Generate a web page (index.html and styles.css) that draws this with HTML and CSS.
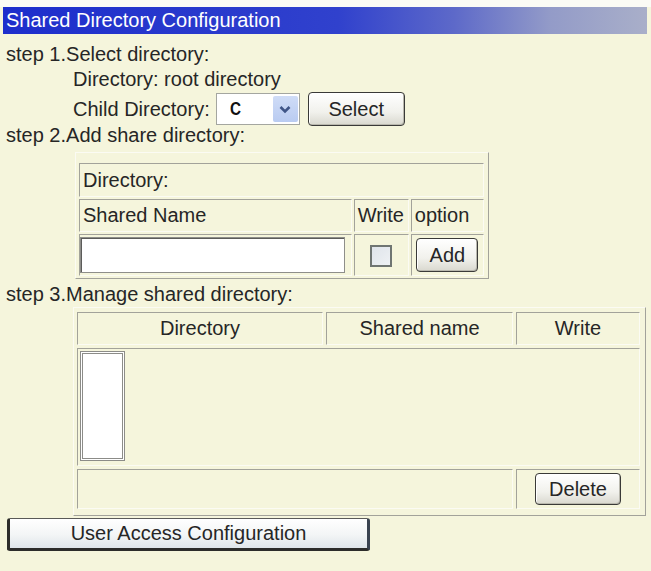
FILE: index.html
```html
<!DOCTYPE html>
<html lang="en">
<head>
    <meta charset="UTF-8">
    <meta name="viewport" content="width=device-width, initial-scale=1.0">
    <title>Shared Directory Configuration</title>
    <link rel="stylesheet" href="styles.css">
</head>
<body>
    <div class="title-bar">Shared Directory Configuration</div>

    <div class="content">
        <div class="step step-first">step 1.Select directory:</div>
        <div class="sub">Directory: root directory</div>
        <div class="sub child-row">
            <span>Child Directory:</span>
            <div class="combo">
                <span class="combo-value">C</span>
                <span class="combo-arrow">
                    <svg width="12" height="9" viewBox="0 0 12 9">
                        <path d="M1.5 2 L6 6.5 L10.5 2" fill="none" stroke="#3f5587" stroke-width="2.6"/>
                    </svg>
                </span>
            </div>
            <button class="btn btn-select">Select</button>
        </div>

        <div class="step step-two">step 2.Add share directory:</div>
        <table class="box add-table">
            <colgroup>
                <col class="add-name">
                <col class="add-write">
                <col class="add-option">
            </colgroup>
            <tr class="row-dir">
                <td colspan="3">Directory:</td>
            </tr>
            <tr class="row-head">
                <td>Shared Name</td>
                <td>Write</td>
                <td>option</td>
            </tr>
            <tr class="row-input">
                <td class="cell-input"><input type="text" class="text-input"></td>
                <td class="cell-center"><span class="check"></span></td>
                <td class="cell-center"><button class="btn btn-add">Add</button></td>
            </tr>
        </table>

        <div class="step step-three">step 3.Manage shared directory:</div>
        <table class="box list-table">
            <colgroup>
                <col class="list-dir">
                <col class="list-name">
                <col class="list-write">
            </colgroup>
            <tr class="row-title">
                <td>Directory</td>
                <td>Shared name</td>
                <td>Write</td>
            </tr>
            <tr class="row-list">
                <td colspan="3" class="cell-list"><div class="listbox"></div></td>
            </tr>
            <tr class="row-actions">
                <td colspan="2"></td>
                <td class="cell-center"><button class="btn btn-delete">Delete</button></td>
            </tr>
        </table>

        <button class="btn-wide">User Access Configuration</button>
    </div>
</body>
</html>
```

FILE: styles.css
```css
* {
    margin: 0;
    padding: 0;
    box-sizing: border-box;
    font-family: 'Liberation Sans', Arial, sans-serif;
}

html {
    background-color: #f5f5dc;
}

body {
    background: linear-gradient(#fbfbf5, #fbfbf5) no-repeat;
    background-size: 100% 7px;
    background-color: #f5f5dc;
    color: #262626;
    font-size: 20px;
    padding-top: 7px;
}

.title-bar {
    margin: 0 4px 0 3px;
    height: 27px;
    line-height: 27px;
    padding-left: 3px;
    color: #fff;
    background: linear-gradient(to right, #1d2ecc 0%, #3041cd 52%, #5d69c9 70%, #939bc8 85%, #a9afc9 100%);
}

.content {
    padding-left: 6px;
}

.step {
    line-height: 25px;
}

.step-first {
    margin-top: 8px;
}

.sub {
    padding-left: 67px;
    line-height: 25px;
}

.child-row {
    display: flex;
    align-items: center;
    height: 34px;
}

.combo {
    display: flex;
    align-items: center;
    justify-content: space-between;
    width: 84px;
    height: 32px;
    margin-left: 6px;
    padding: 2px 1px 2px 12px;
    background-color: #fff;
    border: 1px solid #a4a6a0;
}

.combo-value {
    font-weight: bold;
    font-size: 18px;
    color: #111;
    transform: scaleX(0.85);
}

.combo-arrow {
    display: flex;
    align-items: center;
    justify-content: center;
    width: 25px;
    height: 100%;
    background: linear-gradient(#cfdcf7, #b9cbf1);
    border-radius: 2px;
}

.btn {
    font-size: 20px;
    color: #262626;
    border: 1px solid #3a3a38;
    border-radius: 4px;
    background: linear-gradient(#ffffff, #f1f1ec 60%, #d9d8cf);
    box-shadow: inset -1px -1px 0 #b9b8ae, inset 1px 1px 0 #fff;
}

.btn-select {
    width: 97px;
    height: 34px;
    margin-left: 8px;
}

.step-two {
    margin-top: -3px;
}

.box {
    border-collapse: separate;
    table-layout: fixed;
    border: 1px solid;
    border-color: #fbfbf3 #a2a29a #a2a29a #fbfbf3;
}

.box td {
    border: 1px solid;
    border-color: #a2a29a #fbfbf3 #fbfbf3 #a2a29a;
    padding: 0 3px;
    vertical-align: middle;
    white-space: nowrap;
}

.add-table {
    width: 414px;
    margin: 4px 0 0 69px;
    border-spacing: 2px;
    padding: 8px 2px 0 1px;
}

.add-name {
    width: 272px;
}

.add-write {
    width: 55px;
}

.add-option {
    width: 73px;
}

.row-dir {
    height: 34px;
}

.row-head {
    height: 33px;
}

.row-input {
    height: 42px;
}

.add-table .cell-input {
    padding: 0;
}

.text-input {
    display: block;
    width: 265px;
    height: 36px;
    background-color: #fff;
    border: 1px solid #8e8e8a;
    box-shadow: inset 1px 1px 0 #5c5c5a;
}

.cell-center {
    text-align: center;
}

.check {
    display: inline-block;
    width: 22px;
    height: 22px;
    vertical-align: middle;
    border: 2px solid #6f7572;
    background: linear-gradient(135deg, #dfe4ea, #eef1f4);
}

.btn-add {
    width: 62px;
    height: 34px;
    vertical-align: middle;
}

.step-three {
    margin-top: 3px;
}

.list-table {
    width: 573px;
    margin-left: 67px;
    border-spacing: 3px;
    padding: 1px 2px 3px 0;
}

.list-dir {
    width: 246px;
}

.list-name {
    width: 187px;
}

.list-write {
    width: 124px;
}

.row-title {
    height: 33px;
}

.row-title td {
    text-align: center;
}

.row-list {
    height: 118px;
}

.list-table .cell-list {
    vertical-align: top;
    padding: 2px 2px;
}

.listbox {
    width: 45px;
    height: 110px;
    background-color: #fff;
    border: 3px double #8c8c88;
}

.row-actions {
    height: 40px;
}

.btn-delete {
    width: 86px;
    height: 32px;
    vertical-align: middle;
}

.btn-wide {
    display: block;
    width: 363px;
    height: 33px;
    margin: 2px 0 0 1px;
    font-size: 20px;
    color: #262626;
    border-style: solid;
    border-width: 1px 3px 3px 3px;
    border-color: #5a5a58 #3a4350 #2c2c2a #2c2c2a;
    border-radius: 3px;
    background: linear-gradient(#ffffff, #f3f5f6 55%, #dfe5ea);
}
```
